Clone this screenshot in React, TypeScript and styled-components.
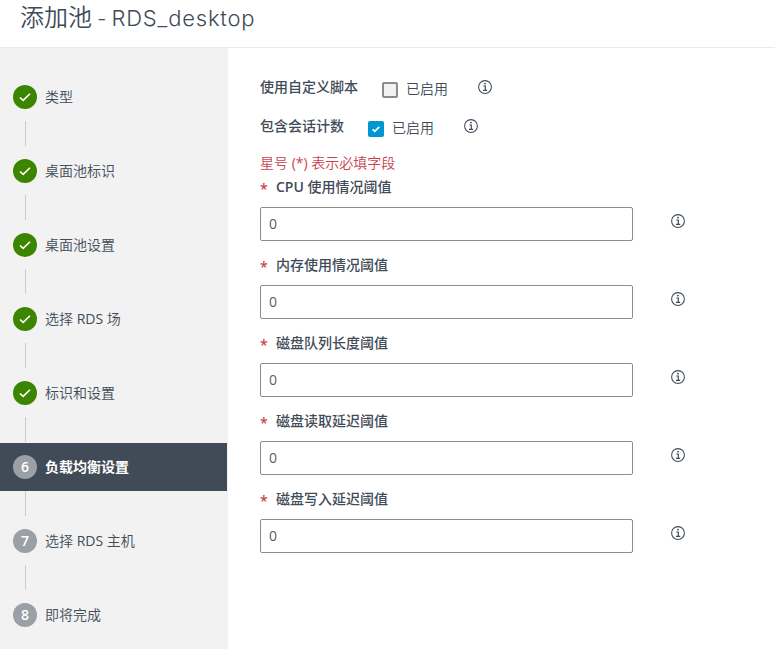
import React from "react";
import styled, { createGlobalStyle } from "styled-components";

const GlobalStyle = createGlobalStyle`
  * { box-sizing: border-box; }
  body {
    margin: 0;
    background: #fff;
    color: #414b58;
    font-family: "Open Sans", "Noto Sans CJK SC", sans-serif;
    font-size: 14px;
    overflow: hidden;
  }
`;

const Wizard = styled.div`
  display: flex;
  flex-direction: column;
  width: 775px;
  height: 649px;
  overflow: hidden;
`;

const Header = styled.header`
  height: 48px;
  flex: none;
  padding-left: 20px;
  border-bottom: 1px solid #e9e9e9;
`;

const Title = styled.h1`
  margin: 0;
  font-family: Inter, "Noto Sans CJK SC", sans-serif;
  font-size: 24px;
  font-weight: 350;
  line-height: 36px;
  white-space: pre;
`;

const TitleDash = styled.span`
  font-size: 20px;
  letter-spacing: -0.3px;
`;

const TitleLatin = styled.span`
  font-size: 22px;
  font-weight: 360;
  letter-spacing: 0.8px;
`;

const Body = styled.div`
  display: flex;
  flex: 1;
  min-height: 0;
`;

const Sidebar = styled.nav`
  width: 228px;
  flex: none;
  padding-top: 25px;
  background: #f2f2f2;
`;

const Step = styled.div<{ $active?: boolean }>`
  display: flex;
  align-items: center;
  gap: 8px;
  width: 227px;
  height: 48px;
  padding-left: 13px;
  line-height: 20px;
  background: ${(p) => (p.$active ? "#414b57" : "transparent")};
  color: ${(p) => (p.$active ? "#fff" : "#414b58")};
  font-weight: ${(p) => (p.$active ? 700 : 350)};
`;

const Badge = styled.span<{ $done?: boolean }>`
  display: flex;
  align-items: center;
  justify-content: center;
  width: 24px;
  height: 24px;
  border-radius: 50%;
  background: ${(p) => (p.$done ? "#3c8500" : "#9b9fa6")};
  color: #fff;
  font-weight: 600;
`;

const Connector = styled.div`
  width: 1px;
  height: 25px;
  margin: 0 0 1px 25px;
  background: #ccc;
`;

const Form = styled.main`
  flex: 1;
  padding: 24px 0 0 32px;
`;

const OptionRow = styled.div`
  display: flex;
  height: 39px;
  line-height: 30px;
`;

const OptionLabel = styled.span`
  font-weight: 500;
  margin-right: 24px;
`;

const Checkbox = styled.span<{ $checked?: boolean }>`
  display: flex;
  align-items: center;
  justify-content: center;
  width: 16px;
  height: 16px;
  margin: 10px 8px 0 0;
  border: ${(p) => (p.$checked ? "0" : "2px solid #8c8c8c")};
  border-radius: 2px;
  background: ${(p) => (p.$checked ? "#0095d3" : "#f2f2f2")};
`;

const OptionText = styled.span`
  margin: 2px 30px 0 0;
  font-weight: 350;
`;

const Required = styled.div`
  height: 24px;
  line-height: 24px;
  margin-top: 1px;
  color: #c9434f;
  font-weight: 350;
`;

const Field = styled.div`
  display: flex;
  flex-direction: column;
  height: 78px;
`;

const FieldLabel = styled.label`
  display: flex;
  height: 32px;
  line-height: 24px;
  font-weight: 500;
`;

const Star = styled.span`
  width: 16px;
  padding-top: 2px;
  color: #c9434f;
  font-weight: 600;
`;

const Latin = styled.span<{ $weight?: number }>`
  white-space: pre;
  font-weight: ${(p) => p.$weight ?? 400};
`;

const FieldControl = styled.div`
  display: flex;
  gap: 38px;
`;

const Input = styled.input`
  width: 373px;
  height: 34px;
  padding: 0 8px 1px;
  border: 1px solid #8c8c8c;
  border-radius: 2px;
  outline: 0;
  background: #fff;
  color: #565f6b;
  font: 400 14px "Open Sans", sans-serif;
`;

const InfoSvg = styled.svg<{ $top: number }>`
  flex: none;
  margin-top: ${(p) => p.$top}px;
`;

const InfoIcon = ({ top }: { top: number }) => (
  <InfoSvg $top={top} width="14" height="14" viewBox="0 0 14 14" fill="none" stroke="#414b58">
    <circle cx="7" cy="7" r="6.4" strokeWidth="1.05" />
    <path d="M5.3 6H7.3V10M5 10.3H9.2" strokeWidth="1.2" />
    <circle cx="7" cy="3.6" r="0.95" fill="#414b58" stroke="none" />
  </InfoSvg>
);

const CheckIcon = ({ size, width }: { size: number; width: number }) => (
  <svg width={size} height={size} viewBox="0 0 12 12" fill="none" stroke="#fff" strokeWidth={width}>
    <path d="M1 6.5L4.2 9.4L11 2.8" />
  </svg>
);

// Latin runs are set one step heavier than the Chinese text around them.
const MixedText = ({ text }: { text: string }) => (
  <span>
    {text.split(/([\x20-\x7e]+)/).map((part, i) => (i % 2 ? <Latin key={i}>{part}</Latin> : part))}
  </span>
);

const steps = ["类型", "桌面池标识", "桌面池设置", "选择 RDS 场", "标识和设置", "负载均衡设置", "选择 RDS 主机", "即将完成"];
const current = 5;

const options = [
  { label: "使用自定义脚本", checked: false },
  { label: "包含会话计数", checked: true },
];

const fields = [
  { latin: "CPU ", label: "使用情况阈值" },
  { latin: "", label: "内存使用情况阈值" },
  { latin: "", label: "磁盘队列长度阈值" },
  { latin: "", label: "磁盘读取延迟阈值" },
  { latin: "", label: "磁盘写入延迟阈值" },
];

export default function App() {
  return (
    <>
      <GlobalStyle />
      <Wizard>
        <Header>
          <Title>添加池<TitleDash> - </TitleDash><TitleLatin>RDS_desktop</TitleLatin></Title>
        </Header>
        <Body>
          <Sidebar>
            {steps.map((name, i) => (
              <React.Fragment key={name}>
                <Step $active={i === current}>
                  <Badge $done={i < current}>
                    {i < current ? <CheckIcon size={12} width={1.6} /> : i + 1}
                  </Badge>
                  <MixedText text={name} />
                </Step>
                {i < steps.length - 1 && <Connector />}
              </React.Fragment>
            ))}
          </Sidebar>
          <Form>
            {options.map((o) => (
              <OptionRow key={o.label}>
                <OptionLabel>{o.label}</OptionLabel>
                <Checkbox $checked={o.checked}>
                  {o.checked && <CheckIcon size={8} width={2.6} />}
                </Checkbox>
                <OptionText>已启用</OptionText>
                <InfoIcon top={8} />
              </OptionRow>
            ))}
            <Required><MixedText text="星号 (*) 表示必填字段" /></Required>
            {fields.map((f) => (
              <Field key={f.label}>
                <FieldLabel>
                  <Star>*</Star>
                  <Latin $weight={600}>{f.latin}</Latin>
                  {f.label}
                </FieldLabel>
                <FieldControl>
                  <Input defaultValue="0" />
                  <InfoIcon top={7} />
                </FieldControl>
              </Field>
            ))}
          </Form>
        </Body>
      </Wizard>
    </>
  );
}
